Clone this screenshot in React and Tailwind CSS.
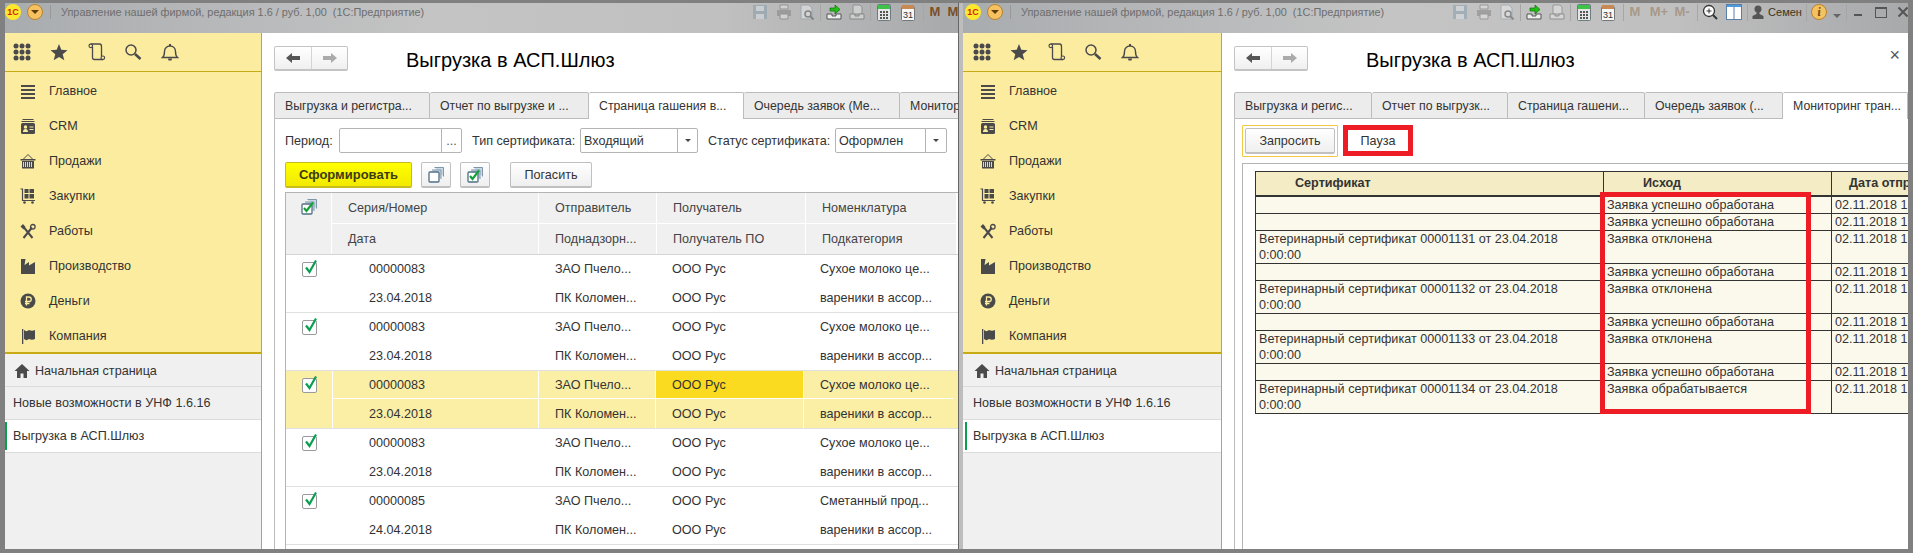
import React from 'react';

const Ic = ({ children, w = 16, h = 16, vb }) => (
  <svg width={w} height={h} viewBox={vb || `0 0 ${w} ${h}`} className="shrink-0">{children}</svg>
);

const dark = '#4a4a4a';

const menuIcons = {
  list: (
    <Ic>
      <path d="M1 2h14v2H1zM1 6h14v2H1zM1 10h14v2H1zM1 14h14v2H1z" fill={dark} />
    </Ic>
  ),
  crm: (
    <Ic>
      <path d="M2.500 1h11v1h-11zM1.500 3h13v1h-13z" fill={dark} />
      <rect x="1" y="5" width="14" height="11" rx="1.500" fill={dark} />
      <circle cx="5.500" cy="9" r="1.700" fill="#fbeca0" />
      <path d="M3 14c0-2 1-3 2.500-3S8 12 8 14zM9.500 8.500h4v1h-4zM9.500 11h4v1h-4z" fill="#fbeca0" />
    </Ic>
  ),
  basket: (
    <Ic>
      <path d="M3.500 6 8 1.500 12.500 6" fill="none" stroke={dark} strokeWidth="1" />
      <path d="M0.500 6h15v1.500H0.500z" fill={dark} />
      <path d="M2 8h12v7.500H2z" fill={dark} />
      <path d="M3.500 9v5M5.500 9v5M7.500 9v5M9.500 9v5M11.500 9v5" stroke="#fbeca0" strokeWidth="0.900" />
    </Ic>
  ),
  cart: (
    <Ic>
      <path d="M0.500 1h2v11.500H15" fill="none" stroke={dark} strokeWidth="1.200" />
      <path d="M4.500 1h4v4h-4zM9.500 1h4.500v4H9.500zM4.500 6h4v4.500h-4zM9.500 6h4.500v4.500H9.500z" fill={dark} />
      <circle cx="4.500" cy="14.500" r="1.300" fill={dark} />
      <circle cx="12.500" cy="14.500" r="1.300" fill={dark} />
    </Ic>
  ),
  tools: (
    <Ic>
      <path d="M3.500 15 12 4.500M12.500 15 4 4.500" stroke={dark} strokeWidth="2" />
      <path d="M0.500 3.500 3 1l2.500 3L3.500 6.500z" fill={dark} />
      <circle cx="12.800" cy="3.800" r="2.300" fill="none" stroke={dark} strokeWidth="1.300" />
    </Ic>
  ),
  factory: (
    <Ic>
      <path d="M1 1h4.500L4.500 7 9 4v3.500L15 4v12H1z" fill={dark} />
    </Ic>
  ),
  ruble: (
    <Ic>
      <circle cx="8" cy="8" r="7.500" fill={dark} />
      <path d="M6.500 12.500v-8.500h2.500a2.200 2.200 0 0 1 0 4.500H5M5 10.500h4.500" fill="none" stroke="#fbeca0" strokeWidth="1.300" />
    </Ic>
  ),
  flag: (
    <Ic>
      <path d="M2 1h1.300v15H2z" fill={dark} />
      <path d="M4 2c2 1.500 3 1.500 5 0 2 1 4 1 6 0v9c-2 1-4 1-6 0-2 1.500-3 1.500-5 0z" fill={dark} />
    </Ic>
  ),
};

const menu = [
  ['Главное', 'list'],
  ['CRM', 'crm'],
  ['Продажи', 'basket'],
  ['Закупки', 'cart'],
  ['Работы', 'tools'],
  ['Производство', 'factory'],
  ['Деньги', 'ruble'],
  ['Компания', 'flag'],
];

const Sidebar = ({ shift }) => (
  <div className={`flex h-full flex-col shrink-0 border-r border-[#c8a916] bg-[#f0f0f0] ${shift ? 'w-[259px]' : 'w-[257px]'}`}>
    <div className={`flex h-[39px] shrink-0 items-center border-b border-[#c8a916] bg-[#fbeca0] ${shift ? 'pl-[10px]' : 'pl-[8px]'}`}>
      <Ic w={18} h={18}>
        {[3, 9, 15].map((y) => [3, 9, 15].map((x) => <circle key={`${x}${y}`} cx={x} cy={y} r="2.500" fill={dark} />))}
      </Ic>
      <div className="ml-[19px]">
        <Ic w={18} h={18}>
          <path d="M9 1l2.300 5.800 6.200.400-4.800 4 1.600 6.100L9 14l-5.300 3.300 1.600-6.100-4.800-4 6.200-.400z" fill={dark} />
        </Ic>
      </div>
      <div className="ml-[20px]">
        <Ic w={18} h={18}>
          <path d="M2.500 1h9c1.500 0 2 1 2 2.500V13M4.500 3.500V14.500c0 1.200.8 2 2 2H15" fill="none" stroke={dark} strokeWidth="1.300" />
          <circle cx="2.800" cy="2.800" r="1.800" fill="none" stroke={dark} strokeWidth="1.200" />
          <circle cx="14.800" cy="14.800" r="1.800" fill="none" stroke={dark} strokeWidth="1.200" />
        </Ic>
      </div>
      <div className="ml-[18px]">
        <Ic w={18} h={18}>
          <circle cx="7" cy="7" r="5" fill="none" stroke={dark} strokeWidth="1.500" />
          <path d="M11 11l5.500 5" stroke={dark} strokeWidth="2.500" />
        </Ic>
      </div>
      <div className="ml-[19px]">
        <Ic w={18} h={18}>
          <path d="M1.500 14.500c2-1.500 2-3 2-6 0-3.500 2.500-5.500 5.500-5.500s5.500 2 5.500 5.500c0 3 0 4.500 2 6z" fill="none" stroke={dark} strokeWidth="1.400" />
          <path d="M7 15.500h4l-.5 2h-3zM8 1h2v2H8z" fill={dark} />
        </Ic>
      </div>
    </div>
    <div className={`flex h-[282px] shrink-0 flex-col border-b-2 border-[#c8a916] bg-[#fbeca0] pt-[1px] ${shift ? 'pl-[17px]' : 'pl-[15px]'}`}>
      {menu.map(([name, icon]) => (
        <div key={name} className="flex h-[35px] shrink-0 items-center gap-[13px] text-[#333]">
          {menuIcons[icon]}
          <span>{name}</span>
        </div>
      ))}
    </div>
    <div className={`flex h-[33px] shrink-0 items-center gap-[5px] border-b border-[#dcdcdc] pt-[1px] text-[#333] ${shift ? 'pl-[11px]' : 'pl-[9px]'}`}>
      <Ic>
        <path d="M8 1 15.500 8H13v7H9.500v-4.500h-3V15H3V8H.5z" fill={dark} />
      </Ic>
      <span>Начальная страница</span>
    </div>
    <div className={`flex h-[33px] shrink-0 items-center border-b border-[#dcdcdc] text-[#333] ${shift ? 'pl-[10px]' : 'pl-[8px]'}`}>
      Новые возможности в УНФ 1.6.16
    </div>
    <div className={`flex h-[33px] shrink-0 items-center border-b border-[#dcdcdc] bg-white text-[#333] ${shift ? 'pl-[2px]' : ''}`}>
      <div className="h-[28px] w-[2px] bg-[#0a9f50]" />
      <span className="ml-[6px]">Выгрузка в АСП.Шлюз</span>
    </div>
  </div>
);

const Faded = ({ children }) => <div className="opacity-45">{children}</div>;

const SaveIcon = () => (
  <Faded>
    <Ic>
      <path d="M1 1h14v14H1z" fill="#7d97a8" />
      <path d="M4 2h8v5H4zM4 10h8v5H4z" fill="#dfe5ea" />
    </Ic>
  </Faded>
);
const PrintIcon = () => (
  <Faded>
    <Ic>
      <path d="M4 1h8v4H4z" fill="#eee" stroke="#666" />
      <path d="M1 6h14v6H1z" fill="#777" />
      <path d="M4 10h8v5H4z" fill="#eee" stroke="#666" />
    </Ic>
  </Faded>
);
const PreviewIcon = () => (
  <Faded>
    <Ic>
      <path d="M2 1h8l3 3v11H2z" fill="#f4f4f4" stroke="#7d97a8" />
      <circle cx="9" cy="10" r="3" fill="none" stroke="#444" strokeWidth="1.500" />
      <path d="M11 12l3.500 3.500" stroke="#444" strokeWidth="2" />
    </Ic>
  </Faded>
);
const ImportIcon = () => (
  <Ic>
    <path d="M4 4h5V1l5 4.500L9 10V7H4z" fill="#1fbf16" stroke="#116b0d" strokeWidth=".7" />
    <path d="M1 10h5v2h4v-2h5v5H1z" fill="#eee" stroke="#555" />
  </Ic>
);
const ExportIcon = () => (
  <Faded>
    <Ic>
      <path d="M4 1h7l2 2v7H4z" fill="#eee" stroke="#666" />
      <path d="M1 10h5v2h4v-2h5v5H1z" fill="#eee" stroke="#555" />
    </Ic>
  </Faded>
);
const CalcIcon = () => (
  <Ic w={14} h={17}>
    <rect x=".5" y=".5" width="13" height="16" rx="1" fill="#e6e6e6" stroke="#6b7b80" />
    <path d="M1 1h12v4H1z" fill="#3ec24a" />
    <path d="M3 7h2v2H3zM6 7h2v2H6zM9 7h2v2H9zM3 10h2v2H3zM6 10h2v2H6zM9 10h2v2H9zM3 13h2v2H3zM6 13h2v2H6zM9 13h2v2H9z" fill="#555" />
  </Ic>
);
const CalendarIcon = () => (
  <Ic w={14} h={17}>
    <rect x=".5" y="2.500" width="13" height="14" rx="1" fill="#f7f7f7" stroke="#777" />
    <path d="M1 1h12v4H1z" fill="#c88a52" />
    <text x="7" y="14" textAnchor="middle" fontSize="9" fill="#333">31</text>
  </Ic>
);
const Memo = ({ t, on }) => (
  <span className={`font-bold text-[13px] ${on ? 'text-[#7a4f27]' : 'text-[#a89888]'}`}>{t}</span>
);

const Slot = ({ w, children }) => (
  <div className="flex h-[18px] shrink-0 items-center justify-center" style={{ width: w }}>
    {children}
  </div>
);
const Sep = ({ w }) => (
  <Slot w={w}>
    <div className="h-[17px] w-px shrink-0 bg-[#a6a6a6]" />
  </Slot>
);

const TitleBar = ({ right }) => (
  <div className="flex h-[30px] shrink-0 items-start overflow-hidden bg-[linear-gradient(90deg,#a9acaf_0%,#c4c4c4_45%,#c0c0c0_75%,#a8a9ab_100%)]">
    <div className={`flex h-[18px] shrink-0 items-center ${right ? 'w-[485px] pl-[2px]' : 'w-[743px]'}`}>
      <div className="flex h-[16px] w-[16px] items-center justify-center rounded-full bg-[#fde92c] text-[9px] font-bold leading-none text-[#d61f10]">1С</div>
      <div className="ml-[6px] flex h-[16px] w-[16px] items-center justify-center rounded-full border border-[#b9822a] bg-[#f6c161]">
        <div className="h-0 w-0 border-x-[4px] border-t-[4px] border-x-transparent border-t-[#5c3d10]" />
      </div>
      <div className="ml-[7px] h-[14px] w-px bg-[#999]" />
      <span className="ml-[10px] whitespace-nowrap text-[10.900px] text-[#6e6e6e]">Управление нашей фирмой, редакция 1.6 / руб. 1,00&nbsp; (1С:Предприятие)</span>
    </div>
    <div className="flex h-[18px] items-center">
      <Slot w={24}><SaveIcon /></Slot>
      <Slot w={23}><PrintIcon /></Slot>
      <Slot w={24}><PreviewIcon /></Slot>
      <Sep w={3} />
      <Slot w={24}><ImportIcon /></Slot>
      <Slot w={22}><ExportIcon /></Slot>
      <Sep w={4} />
      <Slot w={24}><CalcIcon /></Slot>
      <Slot w={24}><CalendarIcon /></Slot>
      <Sep w={6} />
      {right ? (
        <>
          <Slot w={18}><Memo t="M" /></Slot>
          <Slot w={30}><Memo t="M+" /></Slot>
          <Slot w={16}><Memo t="M-" /></Slot>
          <Sep w={14} />
          <Slot w={12}>
            <Ic>
              <circle cx="7" cy="7" r="5.500" fill="#fff" stroke="#333" strokeWidth="1.300" />
              <path d="M4.500 7h5M7 4.500v5" stroke="#333" />
              <path d="M11 11l4 4" stroke="#333" strokeWidth="2" />
            </Ic>
          </Slot>
          <Slot w={6} />
          <Slot w={24}>
            <Ic>
              <rect x=".5" y=".5" width="15" height="15" fill="#fff" stroke="#5a7fa8" />
              <path d="M1 1h14v2H1z" fill="#4c9be0" />
              <path d="M8 3v12" stroke="#5a7fa8" />
            </Ic>
          </Slot>
          <Sep w={2} />
          <Slot w={20}>
            <Ic w={12} h={14}>
              <circle cx="6" cy="4" r="3.500" fill="#555" />
              <path d="M4.500 7h3v2l4 2v3H.5v-3l4-2z" fill="#555" />
            </Ic>
          </Slot>
          <Slot w={34}><span className="whitespace-nowrap text-[11px] text-[#3d3418]">Семен</span></Slot>
          <Sep w={8} />
          <Slot w={18}>
            <div className="flex h-[16px] w-[16px] shrink-0 items-center justify-center rounded-full border border-[#b9822a] bg-[#f6c161] font-serif text-[12px] font-bold italic leading-none text-[#6b4a14]">i</div>
          </Slot>
          <Slot w={18}>
            <div className="mt-[7px] h-0 w-0 border-x-[4px] border-t-[4px] border-x-transparent border-t-[#666]" />
          </Slot>
          <Sep w={1} />
          <Slot w={22}><div className="mt-[6px] h-[2px] w-[8px] bg-[#555]" /></Slot>
          <Slot w={24}><div className="h-[11px] w-[12px] border border-t-2 border-[#555]" /></Slot>
          <Slot w={20}>
            <Ic w={12} h={12}>
              <path d="M1.500 1.500l9 9M10.500 1.500l-9 9" stroke="#555" strokeWidth="2" />
            </Ic>
          </Slot>
        </>
      ) : (
        <>
          <Slot w={18}><Memo t="M" on /></Slot>
          <Slot w={18}><Memo t="M" on /></Slot>
        </>
      )}
    </div>
  </div>
);

const NavButtons = () => (
  <div className="flex h-[25px] w-[74px] items-stretch rounded-[2px] border border-b-2 border-[#c4c4c4] bg-gradient-to-b from-white to-[#f0f0f0]">
    <div className="flex w-[37px] items-center justify-center border-r border-[#d4d4d4]">
      <Ic w={14} h={12}>
        <path d="M0 6 6 1v3h8v4H6v3z" fill="#555" />
      </Ic>
    </div>
    <div className="flex flex-1 items-center justify-center">
      <Ic w={14} h={12}>
        <path d="M14 6 8 1v3H0v4h8v3z" fill="#aaa" />
      </Ic>
    </div>
  </div>
);

const Tabs = ({ items }) => (
  <div className="flex h-[27px] shrink-0 text-[12.300px]">
    {items.map(([label, width, active]) => (
      <div
        key={label}
        className={`flex shrink-0 items-center overflow-hidden whitespace-nowrap rounded-t-[2px] border-t border-r border-[#bcbcbc] pl-[10px] first:border-l ${active ? 'bg-white text-[#333]' : 'border-b bg-[#ececec] text-[#333]'}`}
        style={{ width }}
      >
        {label}
      </div>
    ))}
  </div>
);

const Field = ({ width, value, tail, button }) => (
  <div className="flex h-[25px] items-stretch rounded-[2px] border border-[#b4b4b4] bg-white" style={{ width }}>
    <div className="flex flex-1 items-center pl-[3px] text-[#333]">{value}</div>
    <div className={`flex items-center justify-center border-l border-[#b4b4b4] ${tail}`}>
      {button === 'dots' ? (
        <span className="text-[#555]">...</span>
      ) : (
        <div className="h-0 w-0 border-x-[3px] border-t-[3px] border-x-transparent border-t-[#444]" />
      )}
    </div>
  </div>
);

const Btn = ({ className, children }) => (
  <div className={`flex h-[26px] items-center justify-center rounded-[2px] border border-b-2 border-[#c0c0c0] bg-gradient-to-b from-white to-[#efefef] text-[#333] ${className}`}>
    {children}
  </div>
);

const StackIcon = ({ check }) => (
  <Ic w={16} h={16}>
    <path d="M6.500.5h9v9M4 3h9v9" fill="#c8d8e4" stroke="#7d97a8" />
    <rect x="1" y="5" width="10" height="10" rx="1" fill="#fff" stroke="#4f6f85" strokeWidth="1.300" />
    {check && <path d="M3 9l2.500 3L12 3.500" fill="none" stroke="#15a03a" strokeWidth="2.200" />}
  </Ic>
);

const CheckBox = () => (
  <div className="relative h-[15px] w-[15px] rounded-[2px] border border-[#9a9a9a] bg-white">
    <svg width="16" height="18" viewBox="0 0 16 18" className="absolute -top-[5px] left-[0px]">
      <path d="M3 9.500l3.500 4.500L13 2.500" fill="none" stroke="#0a9f50" strokeWidth="2.200" />
    </svg>
  </div>
);

const colW = ['w-[206px]', 'w-[117px]', 'w-[148px]', 'w-[150px]'];

const Row = ({ cells, selected }) => (
  <div className={`flex h-[58px] shrink-0 border-b border-[#e0e0e0] text-[#333] ${selected ? 'bg-[#fbeea5]' : 'bg-white'}`}>
    <div className="flex w-[46px] shrink-0 justify-center pt-[7px]">
      <CheckBox />
    </div>
    <div className="flex flex-col">
      {cells.map((line, r) => (
        <div key={r} className={`flex items-stretch ${r === 0 ? 'h-[28px]' : 'h-[29px]'}`}>
          {line.map((c, i) => (
            <div
              key={i}
              className={`flex shrink-0 items-center whitespace-nowrap border-l border-white ${colW[i]} ${i === 0 ? 'pl-[36px]' : 'pl-[16px]'} ${selected && r === 0 && i === 2 ? 'bg-[#fadb20]' : ''} ${selected && r === 0 ? 'border-b' : ''}`}
            >
              {c}
            </div>
          ))}
        </div>
      ))}
    </div>
  </div>
);

const rows = [
  ['00000083', '23.04.2018', 'Сухое молоко це...'],
  ['00000083', '23.04.2018', 'Сухое молоко це...'],
  ['00000083', '23.04.2018', 'Сухое молоко це...', true],
  ['00000083', '23.04.2018', 'Сухое молоко це...'],
  ['00000085', '24.04.2018', 'Сметанный прод...'],
];

const HeadCell = ({ w, children }) => (
  <div className={`flex h-[30px] shrink-0 items-center bg-[#f0f0f0] pl-[16px] text-[#444] ${w}`}>{children}</div>
);

const LeftPage = () => (
  <div className="flex min-w-0 flex-1 flex-col bg-white pl-[12px]">
    <div className="flex h-[59px] shrink-0 items-start pt-[13px]">
      <NavButtons />
      <span className="ml-[58px] mt-[2px] text-[20px] leading-[24px] text-black">Выгрузка в АСП.Шлюз</span>
    </div>
    <Tabs
      items={[
        ['Выгрузка и регистра...', 156],
        ['Отчет по выгрузке и ...', 159],
        ['Страница гашения в...', 155, true],
        ['Очередь заявок (Ме...', 156],
        ['Монитор', 100],
      ]}
    />
    <div className="min-h-0 flex-1 overflow-hidden border-l border-[#bcbcbc] pl-[10px]">
      <div className="flex h-[25px] items-center mt-[9px]">
        <span className="w-[54px] text-[#333]">Период:</span>
        <Field width={123} tail="w-[20px]" button="dots" />
        <span className="ml-[10px] w-[108px] text-[#333]">Тип сертификата:</span>
        <Field width={118} value="Входящий" tail="w-[20px]" />
        <span className="ml-[10px] w-[127px] whitespace-nowrap text-[#333]">Статус сертификата:</span>
        <Field width={112} value="Оформлен" tail="w-[21px]" />
      </div>
      <div className="mt-[9px] flex h-[26px] items-center">
        <div className="flex h-[26px] w-[127px] items-center justify-center rounded-[2px] border border-b-2 border-[#c8bb20] bg-gradient-to-b from-[#ffff00] to-[#f2ea00] text-[13px] font-bold text-[#3c3c10]">Сформировать</div>
        <Btn className="ml-[9px] w-[30px]"><StackIcon /></Btn>
        <Btn className="ml-[9px] w-[30px]"><StackIcon check /></Btn>
        <Btn className="ml-[20px] w-[82px]">Погасить</Btn>
      </div>
      <div className="mt-[4px] h-[400px] w-[673px] border-t border-l border-[#b4b4b4]">
        <div className="flex h-[62px] gap-px border-b border-[#d4d4d4]">
          <div className="flex w-[45px] shrink-0 justify-center bg-[#f0f0f0] pt-[6px]"><StackIcon check /></div>
          <div className="flex flex-col gap-px">
            <div className="flex gap-px">
              <HeadCell w="w-[206px]">Серия/Номер</HeadCell>
              <HeadCell w="w-[117px]">Отправитель</HeadCell>
              <HeadCell w="w-[148px]">Получатель</HeadCell>
              <HeadCell w="w-[150px]">Номенклатура</HeadCell>
            </div>
            <div className="flex gap-px">
              <HeadCell w="w-[206px]">Дата</HeadCell>
              <HeadCell w="w-[117px]">Поднадзорн...</HeadCell>
              <HeadCell w="w-[148px]">Получатель ПО</HeadCell>
              <HeadCell w="w-[150px]">Подкатегория</HeadCell>
            </div>
          </div>
        </div>
        {rows.map(([num, date, name, selected], i) => (
          <Row
            key={i}
            selected={selected}
            cells={[
              [num, 'ЗАО Пчело...', 'ООО Рус', name],
              [date, 'ПК Коломен...', 'ООО Рус', 'вареники в ассор...'],
            ]}
          />
        ))}
      </div>
    </div>
  </div>
);

const certRows = [
  ['', 'Заявка успешно обработана'],
  ['', 'Заявка успешно обработана'],
  ['Ветеринарный сертификат 00001131 от 23.04.2018 0:00:00', 'Заявка отклонена'],
  ['', 'Заявка успешно обработана'],
  ['Ветеринарный сертификат 00001132 от 23.04.2018 0:00:00', 'Заявка отклонена'],
  ['', 'Заявка успешно обработана'],
  ['Ветеринарный сертификат 00001133 от 23.04.2018 0:00:00', 'Заявка отклонена'],
  ['', 'Заявка успешно обработана'],
  ['Ветеринарный сертификат 00001134 от 23.04.2018 0:00:00', 'Заявка обрабатывается'],
];

const RightPage = () => (
  <div className="flex min-w-0 flex-1 flex-col bg-white pl-[12px]">
    <div className="relative flex h-[59px] shrink-0 items-start pt-[13px]">
      <NavButtons />
      <span className="ml-[58px] mt-[2px] text-[20px] leading-[24px] text-black">Выгрузка в АСП.Шлюз</span>
      <span className="absolute right-[8px] top-[11px] text-[18px] leading-[22px] text-[#555]">×</span>
    </div>
    <Tabs
      items={[
        ['Выгрузка и регис...', 138],
        ['Отчет по выгрузк...', 136],
        ['Страница гашени...', 137],
        ['Очередь заявок (...', 138],
        ['Мониторинг тран...', 125, true],
      ]}
    />
    <div className="relative min-h-0 flex-1 overflow-hidden border-l border-[#bcbcbc] pl-[7px]">
      <div className="flex items-start pt-[6px]">
        <div className="rounded-[1px] border border-[#f5c842] p-[2px]">
          <Btn className="w-[90px]">Запросить</Btn>
        </div>
        <div className="ml-[5px] flex h-[31px] w-[70px] items-center justify-center border-[5px] border-[#ee1c25] bg-white text-[#333]">
          Пауза
        </div>
      </div>
      <div className="mt-[6px] h-[400px] border-t border-l border-[#b4b4b4] pl-[12px] pt-[7px]">
        <table className="w-[658px] table-fixed border-collapse text-left text-[#333] leading-[16px]">
          <colgroup>
            <col className="w-[348px]" />
            <col className="w-[228px]" />
            <col className="w-[82px]" />
          </colgroup>
          <thead>
            <tr className="h-[24px] bg-[#f3ecc5] font-bold">
              <th className="border border-b-2 border-[#333] pl-[39px]">Сертификат</th>
              <th className="border border-b-2 border-[#333] pl-[39px]">Исход</th>
              <th className="border border-b-2 border-r-0 border-[#333] pl-[17px] whitespace-nowrap">Дата отпр</th>
            </tr>
          </thead>
          <tbody>
            {certRows.map(([cert, status], i) => (
              <tr key={i} className="bg-[#fbf9ec]">
                <td className={`border border-[#333] px-[3px] align-top ${cert ? 'h-[33px]' : 'h-[17px]'}`}>{cert}</td>
                <td className="border border-[#333] px-[3px] align-top">{status}</td>
                <td className="border border-r-0 border-[#333] px-[3px] align-top whitespace-nowrap">02.11.2018 1</td>
              </tr>
            ))}
          </tbody>
        </table>
      </div>
      {/* red marker drawn over the grid */}
      <div className="pointer-events-none absolute left-[365px] top-[73px] h-[222px] w-[211px] border-[5px] border-[#ee1c25]" />
    </div>
  </div>
);

export default function App() {
  return (
    <div className="flex h-[553px] w-[1913px] overflow-hidden bg-[#808080] pb-[4px] pl-[5px] pr-[5px] pt-[3px] font-['Liberation_Sans',sans-serif] text-[12.600px] leading-[16px]">
      <div className="flex h-full w-[953px] shrink-0 flex-col overflow-hidden">
        <TitleBar />
        <div className="flex min-h-0 flex-1">
          <Sidebar />
          <LeftPage />
        </div>
      </div>
      <div className="w-[5px] shrink-0 border-l border-[#666] bg-[#bdbdbd]" />
      <div className="flex h-full min-w-0 flex-1 flex-col overflow-hidden">
        <TitleBar right />
        <div className="flex min-h-0 flex-1">
          <Sidebar shift />
          <RightPage />
        </div>
      </div>
    </div>
  );
}
